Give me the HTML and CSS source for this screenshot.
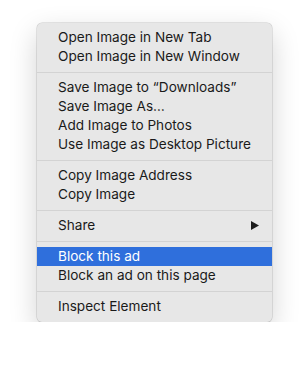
FILE: index.html
```html
<!DOCTYPE html>
<html lang="en">
<head>
    <meta charset="UTF-8">
    <meta name="viewport" content="width=device-width, initial-scale=1.0">
    <title>Context Menu</title>
    <link rel="stylesheet" href="styles.css">
</head>
<body>
    <div class="menu">
        <div class="menu-item">Open Image in New Tab</div>
        <div class="menu-item">Open Image in New Window</div>
        <div class="separator"></div>
        <div class="menu-item">Save Image to “Downloads”</div>
        <div class="menu-item">Save Image As…</div>
        <div class="menu-item">Add Image to Photos</div>
        <div class="menu-item">Use Image as Desktop Picture</div>
        <div class="separator"></div>
        <div class="menu-item">Copy Image Address</div>
        <div class="menu-item">Copy Image</div>
        <div class="separator"></div>
        <div class="menu-item submenu">
            <span>Share</span>
            <svg class="arrow" width="8" height="9" viewBox="0 0 8 9"><path d="M0 0 L8 4.5 L0 9 Z" fill="#1c1c1c"/></svg>
        </div>
        <div class="separator"></div>
        <div class="menu-item selected">Block this ad</div>
        <div class="menu-item">Block an ad on this page</div>
        <div class="separator"></div>
        <div class="menu-item">Inspect Element</div>
    </div>
</body>
</html>
```

FILE: styles.css
```css
body {
    margin: 0;
    background: #ffffff;
    font-family: Inter, "Noto Sans", sans-serif;
}
.menu {
    width: 235px;
    margin: 23px 0 0 37px;
    padding: 5px 0 6px;
    background: #e7e7e7;
    border-radius: 5px;
    box-shadow: 0 0 0 0.5px rgba(0,0,0,0.18), 0 10px 28px rgba(0,0,0,0.18);
}
.menu-item {
    height: 19px;
    line-height: 19px;
    padding: 0 13px 0 21px;
    font-size: 13.6px;
    color: #1a1a1a;
    white-space: nowrap;
}
.submenu {
    display: flex;
    justify-content: space-between;
    align-items: center;
}
.selected {
    background: #2f6fdc;
    color: #ffffff;
}
.separator {
    height: 1px;
    margin: 6px 0 5px;
    background: #d3d3d3;
}
```
